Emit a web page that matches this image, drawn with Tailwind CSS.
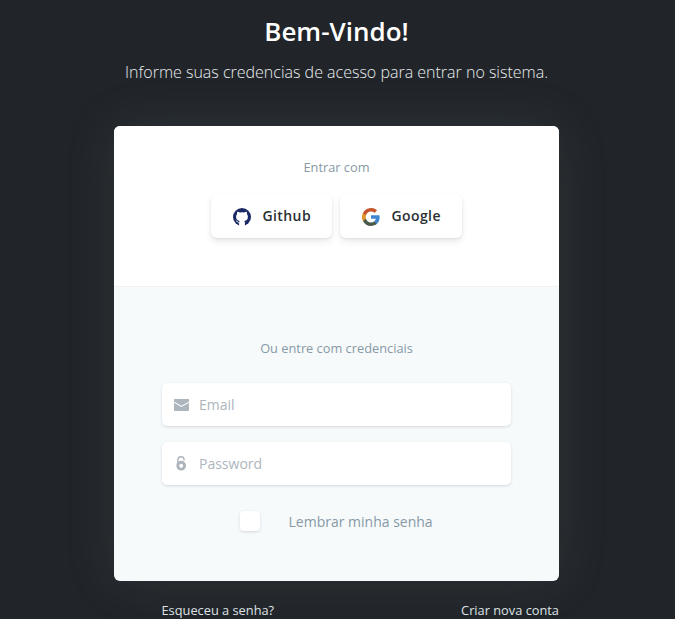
<!DOCTYPE html>
<html lang="pt-BR">
<head>
<meta charset="utf-8">
<title>Bem-Vindo!</title>
<script src="https://cdn.jsdelivr.net/npm/@tailwindcss/browser@4"></script>
</head>
<body class="h-[619px] overflow-hidden bg-[#212529] font-['Open_Sans',sans-serif]">
<main class="w-[673px] pt-[12px]">
  <header class="text-center text-white">
    <h1 class="text-[26px] leading-[39px] font-semibold">Bem-Vindo!</h1>
    <p class="mt-[8px] text-[16px] leading-[27px] font-light text-[#e9ecef] whitespace-nowrap">Informe suas credencias de acesso para entrar no sistema.</p>
  </header>

  <section class="mt-[40px] ml-[114px] w-[445px] h-[455px] overflow-hidden rounded-[6px] bg-[#f6fafb] shadow-[0_0_52px_0_rgba(136,152,160,0.13)]">
    <div class="h-[161px] border-b border-black/5 bg-white pt-[31px]">
      <p class="text-center text-[12.8px] leading-[20px] text-[#8799a6]">Entrar com</p>
      <div class="mt-[17px] flex justify-center gap-2">
        <button class="flex h-[44px] w-[121px] items-center rounded-[6px] bg-white pl-[22px] text-[14px] font-[550] tracking-[0.4px] text-[#2b3033] shadow-[0_4px_6px_rgba(50,50,93,0.09),0_1px_3px_rgba(0,0,0,0.07)]">
          <svg class="mt-[2px] mr-[11.5px] size-[18px]" viewBox="0 0 18 18"><circle cx="9" cy="9" r="9" fill="#1b2a66"/><path fill="#fff" d="M4.3 3.7c1 0 1.8.4 2.6.9a8 8 0 0 1 4.2 0c.8-.5 1.6-.9 2.6-.9.4.9.4 1.7.2 2.4.7.7 1 1.5 1 2.6 0 2.6-1.3 3.9-3.6 4.2.4.4.6 1 .6 1.8V18H6.1v-3.3c0-.8.2-1.4.6-1.8C4.4 12.6 3.1 11.3 3.1 8.700c0-1.100.3-1.900 1-2.600-.2-.7-.2-1.500.2-2.400z"/><path fill="none" stroke="#fff" stroke-width=".9" d="M3 12.700c1.300.100 1.300 2.300 3.600 2.100"/></svg>
          <span class="mb-[2px]">Github</span>
        </button>
        <button class="flex h-[44px] w-[122px] items-center rounded-[6px] bg-white pl-[22px] text-[14px] font-[550] tracking-[0.4px] text-[#2b3033] shadow-[0_4px_6px_rgba(50,50,93,0.09),0_1px_3px_rgba(0,0,0,0.07)]">
          <svg class="mt-[2px] mr-[11.5px] size-[18px]" viewBox="0 0 18 18">
            <path fill="#3e86cf" d="M17.64 9.2c0-.64-.06-1.25-.16-1.84H9v3.48h4.84a4.14 4.14 0 0 1-1.8 2.72v2.26h2.92c1.7-1.57 2.68-3.88 2.68-6.62z"/>
            <path fill="#4b5a4b" d="M9 18c2.43 0 4.47-.8 5.96-2.18l-2.92-2.26c-.8.54-1.84.86-3.04.86-2.34 0-4.33-1.58-5.04-3.71H.96v2.33A9 9 0 0 0 9 18z"/>
            <path fill="#e09428" d="M3.96 10.71a5.4 5.4 0 0 1 0-3.42V4.96H.96a9 9 0 0 0 0 8.08z"/>
            <path fill="#c5562b" d="M9 3.58c1.32 0 2.51.45 3.44 1.35l2.58-2.59A9 9 0 0 0 .96 4.96l3 2.33C4.67 5.16 6.66 3.58 9 3.58z"/>
          </svg>
          <span class="mb-[2px]">Google</span>
        </button>
      </div>
    </div>

    <form class="px-12 pt-[51px]">
      <p class="text-center text-[12.8px] leading-[20px] text-[#8799a6]">Ou entre com credenciais</p>
      <label class="mt-[25px] flex h-[43px] items-center rounded-[5px] bg-white pl-[12px] shadow-[0_1px_3px_rgba(50,50,93,0.15),0_1px_0_rgba(0,0,0,0.02)]">
        <svg class="mr-[10px] h-[12px] w-[15px]" viewBox="0 0 15 12"><path fill="#adb5bd" d="M0 0h15v11q0 1-1 1H1q-1 0-1-1z"/><path fill="none" stroke="#fff" stroke-width="1.1" d="M0 3.2 7.5 7.4 15 3.2"/></svg>
        <input type="email" placeholder="Email" class="w-64 bg-transparent text-[14px] placeholder:text-[#adb5bd]">
      </label>
      <label class="mt-[16px] flex h-[43px] items-center rounded-[5px] bg-white pl-[12px] shadow-[0_1px_3px_rgba(50,50,93,0.15),0_1px_0_rgba(0,0,0,0.02)]">
        <svg class="mr-[10px] h-[15px] w-[15px]" viewBox="0 0 15 15" fill="none" stroke="#adb5bd"><path stroke-width="1.4" d="M3.900 8V3.900a3.100 3.100 0 0 1 6.200 0V4.600"/><circle cx="7.200" cy="9.700" r="3.400" stroke-width="2.900"/><path stroke="#fff" stroke-width="1.400" d="M7.200 8.500v3"/></svg>
        <input type="password" placeholder="Password" class="w-64 bg-transparent text-[14px] placeholder:text-[#adb5bd]">
      </label>
      <label class="mt-[26px] ml-[78px] flex h-[20px] items-center gap-[28.5px]">
        <span class="size-5 rounded-[4px] bg-white shadow-[0_1px_3px_rgba(50,50,93,0.15),0_1px_0_rgba(0,0,0,0.02)]"></span>
        <span class="mt-[2px] text-[14px] leading-[20px] text-[#8799a6]">Lembrar minha senha</span>
      </label>
    </form>
  </section>

  <nav class="mt-[19px] ml-[161.5px] flex w-[397.5px] justify-between text-[12.8px] leading-[20px] text-[#dee2e6]">
    <a>Esqueceu a senha?</a>
    <a>Criar nova conta</a>
  </nav>
</main>
</body>
</html>
